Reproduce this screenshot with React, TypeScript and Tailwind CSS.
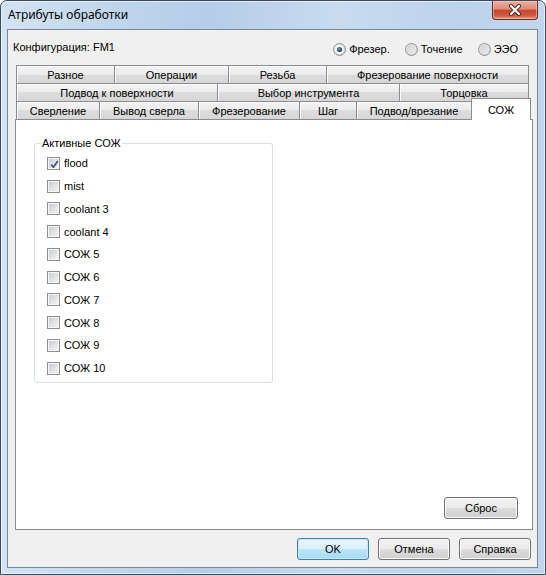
import React from "react";

const tabBase =
  "h-[18px] flex items-center justify-center border-t border-l border-[#898c95] bg-[linear-gradient(#f3f3f3,#ebebeb_50%,#dddddd_50%,#d6d6d6)] shadow-[inset_1px_1px_0_#fbfbfb] whitespace-nowrap";

function Checkbox({ checked }: { checked?: boolean }) {
  return (
    <div className="relative w-[13px] h-[13px] border border-[#8e8f8f] bg-[#f4f4f4] p-0 shrink-0">
      <div className="w-full h-full bg-[linear-gradient(135deg,#c9cdd3,#dfe1e4_50%,#f3f3f3)] border border-[#f7f7f7]" />
      {checked && (
        <svg className="absolute left-[1px] top-[1px]" width="11" height="11" viewBox="0 0 11 11">
          <path d="M2.2 5.6 L4.4 8.2 L8.8 2" fill="none" stroke="#3b4f8c" strokeWidth="1.7" strokeLinejoin="round" />
        </svg>
      )}
    </div>
  );
}

function Radio({ checked }: { checked?: boolean }) {
  return (
    <div className="w-[13px] h-[13px] rounded-full border border-[#8e8f8f] bg-[radial-gradient(circle_at_40%_35%,#fbfbfb,#dcdcdc_60%,#c8c8c8)] flex items-center justify-center shrink-0">
      {checked ? (
        <div className="w-[9px] h-[9px] rounded-full bg-[#f4f4f4] flex items-center justify-center">
          <div className="w-[5px] h-[5px] rounded-full bg-[radial-gradient(circle_at_40%_35%,#6f8fbf,#1c3a6b_70%,#0e2247)]" />
        </div>
      ) : (
        <div className="w-[9px] h-[9px] rounded-full bg-[linear-gradient(135deg,#cfd2d7,#ececec)]" />
      )}
    </div>
  );
}

function Button({ label, primary, w }: { label: string; primary?: boolean; w: string }) {
  return (
    <div
      className={
        "h-[22px] rounded-[3px] border flex items-center justify-center " +
        w +
        " " +
        (primary
          ? "border-[#3c7fb1] bg-[linear-gradient(#eaf6fd,#d9f0fc_50%,#bee6fd_50%,#a7d9f5)] shadow-[inset_0_0_0_1px_#c6e9fb]"
          : "border-[#707070] bg-[linear-gradient(#f2f2f2,#ebebeb_50%,#dddddd_50%,#cfcfcf)] shadow-[inset_0_0_0_1px_#fcfcfc]")
      }
    >
      {label}
    </div>
  );
}

const coolants = ["flood", "mist", "coolant 3", "coolant 4", "СОЖ 5", "СОЖ 6", "СОЖ 7", "СОЖ 8", "СОЖ 9", "СОЖ 10"];

export default function App() {
  return (
    <div className="w-[546px] h-[575px] bg-white font-['Liberation_Sans',Arial,sans-serif] text-[11px] leading-[14px] text-black">
      <div className="w-full h-full flex flex-col rounded-t-[7px] border border-[#3d4a5a] bg-[linear-gradient(90deg,#d3e3f4_0%,#c0d6ec_20%,#b5cde8_38%,#c8dbef_62%,#bcd3eb_85%,#c2d7ed_100%)] shadow-[inset_0_0_0_1px_rgba(255,255,255,0.55)]">
        {/* title bar */}
        <div className="h-[28px] flex justify-between pl-[7px] pr-[7px] shrink-0">
          <div className="pt-[6px] font-['Noto_Sans',sans-serif] text-[12px] leading-[16px] text-black">
            Атрибуты обработки
          </div>
          <div className="w-[46px] h-[19px] rounded-b-[4px] border border-t-0 border-[#6b2a22] bg-[linear-gradient(#eab0a2,#dc8c78_45%,#c8452d_52%,#cf5a40_80%,#e49a7f)] shadow-[inset_0_0_0_1px_rgba(255,210,200,0.5)] flex items-center justify-center">
            <svg width="14" height="12" viewBox="0 0 14 12">
              <path d="M3 2 L11 10 M11 2 L3 10" stroke="#4a2a24" strokeWidth="4" strokeLinecap="round" />
              <path d="M3 2 L11 10 M11 2 L3 10" stroke="#ffffff" strokeWidth="2.2" strokeLinecap="round" />
            </svg>
          </div>
        </div>

        {/* client area */}
        <div className="flex-1 ml-[6px] mr-[7px] mb-[6px] border border-[#7b8794] bg-[#f0f0f0] flex flex-col">
          {/* config row */}
          <div className="h-[35px] flex justify-between shrink-0">
            <div className="pl-[5px] pt-[10px]">Конфигурация: FM1</div>
            <div className="pt-[12px] pr-[19px] flex gap-[15px]">
              <div className="flex items-center gap-[3px] h-[14px]">
                <Radio checked />
                <span>Фрезер.</span>
              </div>
              <div className="flex items-center gap-[3px] h-[14px]">
                <Radio />
                <span>Точение</span>
              </div>
              <div className="flex items-center gap-[3px] h-[14px]">
                <Radio />
                <span>ЭЭО</span>
              </div>
            </div>
          </div>

          {/* tabs */}
          <div className="ml-[8px] flex flex-col shrink-0">
            <div className="flex">
              <div className={tabBase + " w-[98px]"}>Разное</div>
              <div className={tabBase + " w-[114px]"}>Операции</div>
              <div className={tabBase + " w-[98px]"}>Резьба</div>
              <div className={tabBase + " w-[203px] border-r"}>Фрезерование поверхности</div>
            </div>
            <div className="flex">
              <div className={tabBase + " w-[201px]"}>Подвод к поверхности</div>
              <div className={tabBase + " w-[182px]"}>Выбор инструмента</div>
              <div className={tabBase + " w-[130px] border-r"}>Торцовка</div>
            </div>
            <div className="flex items-end h-[18px] relative z-10">
              <div className={tabBase + " w-[83px]"}>Сверление</div>
              <div className={tabBase + " w-[99px]"}>Вывод сверла</div>
              <div className={tabBase + " w-[101px]"}>Фрезерование</div>
              <div className={tabBase + " w-[57px]"}>Шаг</div>
              <div className={tabBase + " w-[115px]"}>Подвод/врезание</div>
              <div className="w-[60px] h-[22px] -mb-px border border-b-0 border-[#898c95] bg-white flex items-start justify-center pt-[4px]">
                СОЖ
              </div>
            </div>
          </div>

          {/* panel */}
          <div className="ml-[7px] w-[518px] h-[411px] border border-[#898c95] bg-white flex flex-col shrink-0">
            <fieldset className="ml-[18px] mt-[16px] w-[239px] border border-[#d5dfe5] rounded-[3px] p-0 pb-[2px]">
              <legend className="ml-[6px] px-[1px] leading-[14px]">Активные СОЖ</legend>
              <div className="pl-[12px] pt-[2px] flex flex-col">
                {coolants.map((c, i) => (
                  <div key={c} className="h-[22.75px] flex items-center gap-[4px]">
                    <Checkbox checked={i === 0} />
                    <span>{c}</span>
                  </div>
                ))}
              </div>
            </fieldset>
            <div className="mt-auto self-end mr-[14px] mb-[10px]">
              <Button label="Сброс" w="w-[74px]" />
            </div>
          </div>

          {/* bottom buttons */}
          <div className="mt-[8px] pr-[6px] flex justify-end gap-[9px]">
            <Button label="OK" primary w="w-[72px]" />
            <Button label="Отмена" w="w-[72px]" />
            <Button label="Справка" w="w-[72px]" />
          </div>
        </div>
      </div>
    </div>
  );
}
